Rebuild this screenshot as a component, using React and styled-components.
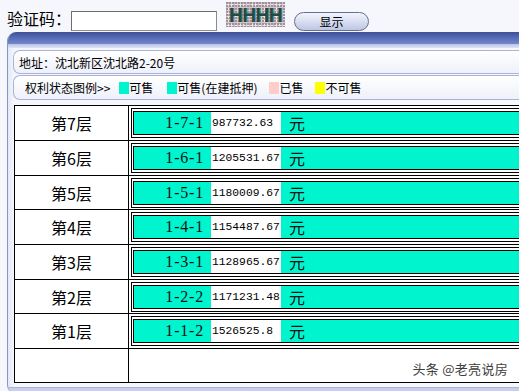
import React from 'react';
import styled, { createGlobalStyle } from 'styled-components';

const Global = createGlobalStyle`
  html, body { margin: 0; padding: 0; background: #f6f7fc; overflow: hidden; }
  body { font-family: "Noto Sans CJK SC", "Noto Sans", sans-serif; color: #000; }
`;

const Page = styled.div`
  position: relative;
  width: 519px;
  height: 391px;
  overflow: hidden;
`;

const TopBar = styled.div`
  display: flex;
  align-items: flex-start;
  height: 32px;
  padding-left: 7px;
`;

const CodeLabel = styled.span`
  width: 64px;
  margin-top: 8px;
  font-size: 16px;
  line-height: 20px;
  white-space: nowrap;
`;

const CodeInput = styled.input`
  box-sizing: border-box;
  width: 146px;
  height: 20px;
  margin: 11px 0 0 0;
  padding: 0;
  border: 1px solid #8c8c8c;
  border-top-color: #6e6e6e;
  border-left-color: #6e6e6e;
  background: #fff;
`;

const Captcha = styled.div`
  width: 59px;
  height: 25px;
  margin: 2px 0 0 9px;
  display: flex;
  align-items: center;
  justify-content: center;
  background-color: #d3c8cd;
  background-image:
    radial-gradient(circle at 1px 1px, #a08f98 0.7px, transparent 1.1px),
    radial-gradient(circle at 2px 3px, #f1ebee 0.8px, transparent 1.2px),
    radial-gradient(circle at 3px 1px, #b9a5ae 0.6px, transparent 1px);
  background-size: 3px 3px, 4px 4px, 5px 3px;
  overflow: hidden;
`;

const CaptchaText = styled.span`
  font-family: "Liberation Sans", sans-serif;
  font-size: 19px;
  font-weight: bold;
  letter-spacing: -0.5px;
  color: #1f4c47;
  line-height: 25px;
  transform: scaleY(1.1);
  text-shadow: 1px 0 0 #5d8a82;
`;

const ShowButton = styled.button`
  box-sizing: border-box;
  width: 75px;
  height: 19px;
  margin: 12px 0 0 9px;
  padding: 0;
  border: 1px solid #66718f;
  border-radius: 10px;
  background: linear-gradient(#f3f5fc, #d6dcf0 55%, #bcc5e4);
  font-family: "Noto Sans CJK SC", sans-serif;
  font-size: 12px;
  line-height: 16px;
  color: #000;
`;

const Panel = styled.div`
  position: relative;
  box-sizing: border-box;
  width: 640px;
  height: 362px;
  margin-left: 7px;
  border-left: 1px solid #8894c4;
  border-radius: 9px 0 0 9px;
  background: linear-gradient(90deg, #e4e8f7, #f4f6fc 6px, #f8f9fd);
  overflow: hidden;
`;

const HeaderBar = styled.div`
  height: 12px;
  background: linear-gradient(#3f4f98, #5569b4 45%, #7388cc);
`;

const HeaderBand = styled.div`
  height: 4px;
  background: linear-gradient(#b7c2e8, #dfe4f5);
`;

const Body = styled.div`
  padding: 2px 0 0 5px;
`;

const InfoBox = styled.div`
  box-sizing: border-box;
  height: ${p => p.$h}px;
  margin-top: ${p => p.$mt}px;
  padding-left: ${p => p.$pl}px;
  border: 1px solid #a9b3d9;
  border-right: none;
  border-radius: 7px 0 0 7px;
  background: linear-gradient(#ffffff, #eef1fa);
  display: flex;
  align-items: center;
  font-size: 12px;
  white-space: nowrap;
`;

const LegendItem = styled.span`
  display: inline-flex;
  align-items: center;
  flex-shrink: 0;
  margin-right: ${p => p.$mr}px;
`;

const Swatch = styled.span`
  display: inline-block;
  width: 10px;
  height: 12px;
  background: ${p => p.$c};
`;

const Table = styled.div`
  margin: 5px 0 0 1px;
  background: #fff;
`;

const Row = styled.div`
  display: flex;
  box-sizing: content-box;
  height: ${p => p.$h - 1}px;
  border-top: 1px solid #000;
  border-bottom: ${p => (p.$last ? '1px solid #000' : 'none')};
`;

const FloorCell = styled.div`
  width: 113px;
  flex-shrink: 0;
  border-left: 1px solid #000;
  border-right: 1px solid #000;
  display: flex;
  align-items: center;
  justify-content: center;
  font-size: 16px;
  background: #fff;
`;

const UnitCell = styled.div`
  flex: 1;
  display: flex;
  padding: 2px 0 ${p => p.$pb}px 2px;
  background: #fff;
`;

const UnitTable = styled.div`
  flex: 1;
  display: flex;
  border: 1px solid #000;
  border-right: none;
  padding: 2px 0 2px 1px;
`;

const TealCell = styled.div`
  flex: 1;
  display: flex;
  align-items: stretch;
  border: 1px solid #000;
  border-right: none;
  background: #00f5cf;
`;

const UnitCode = styled.span`
  width: 70px;
  padding-right: 7px;
  display: flex;
  align-items: center;
  justify-content: flex-end;
  font-family: "Liberation Serif", serif;
  font-size: 16px;
  letter-spacing: 0.8px;
  color: #111;
`;

const Price = styled.span`
  width: 69px;
  padding-left: 1px;
  background: #fff;
  display: flex;
  align-items: center;
  font-family: "Liberation Mono", monospace;
  font-size: 11.3px;
  color: #000;
`;

const Yuan = styled.span`
  margin-left: 8px;
  display: flex;
  align-items: center;
  font-size: 16px;
  color: #111;
`;

const FooterGap = styled.div`
  height: 4px;
`;

const FooterBar = styled.div`
  height: 8px;
  margin-left: -5px;
  border-top: 1px solid #aab4dc;
  background: linear-gradient(#c3ccee, #d4dbf4);
`;

const Watermark = styled.span`
  position: absolute;
  right: 11px;
  bottom: 13px;
  font-size: 13px;
  color: #3d3d3d;
  text-shadow: 0 0 2px #fff, 0 0 2px #fff;
  letter-spacing: 0.3px;
`;

const floors = [
  { f: '第7层', code: '1-7-1', price: '987732.63', h: 35 },
  { f: '第6层', code: '1-6-1', price: '1205531.67', h: 35 },
  { f: '第5层', code: '1-5-1', price: '1180009.67', h: 34 },
  { f: '第4层', code: '1-4-1', price: '1154487.67', h: 35 },
  { f: '第3层', code: '1-3-1', price: '1128965.67', h: 35 },
  { f: '第2层', code: '1-2-2', price: '1171231.48', h: 34 },
  { f: '第1层', code: '1-1-2', price: '1526525.8', h: 35 },
];

export default function App() {
  return (
    <Page>
      <Global />
      <TopBar>
        <CodeLabel>验证码：</CodeLabel>
        <CodeInput type="text" />
        <Captcha><CaptchaText>HHHH</CaptchaText></Captcha>
        <ShowButton>显示</ShowButton>
      </TopBar>
      <Panel>
        <HeaderBar />
        <HeaderBand />
        <Body>
          <InfoBox $h={24} $mt={0} $pl={5}>地址：沈北新区沈北路2-20号</InfoBox>
          <InfoBox $h={25} $mt={1} $pl={11}>
            <LegendItem $mr={9}>权利状态图例&gt;&gt;</LegendItem>
            <LegendItem $mr={14}><Swatch $c="#00f5cf" />可售</LegendItem>
            <LegendItem $mr={12}><Swatch $c="#00f5cf" />可售(在建抵押)</LegendItem>
            <LegendItem $mr={12}><Swatch $c="#ffcccc" />已售</LegendItem>
            <LegendItem $mr={12}><Swatch $c="#ffff00" />不可售</LegendItem>
          </InfoBox>
          <Table>
            {floors.map((r) => (
              <Row key={r.f} $h={r.h}>
                <FloorCell>{r.f}</FloorCell>
                <UnitCell $pb={r.h - 33}>
                  <UnitTable>
                    <TealCell>
                      <UnitCode>{r.code}</UnitCode>
                      <Price>{r.price}</Price>
                      <Yuan>元</Yuan>
                    </TealCell>
                  </UnitTable>
                </UnitCell>
              </Row>
            ))}
            <Row $h={34} $last>
              <FloorCell />
              <UnitCell $pb={0} />
            </Row>
          </Table>
          <FooterGap />
          <FooterBar />
        </Body>
      </Panel>
      <Watermark>头条 @老亮说房</Watermark>
    </Page>
  );
}
